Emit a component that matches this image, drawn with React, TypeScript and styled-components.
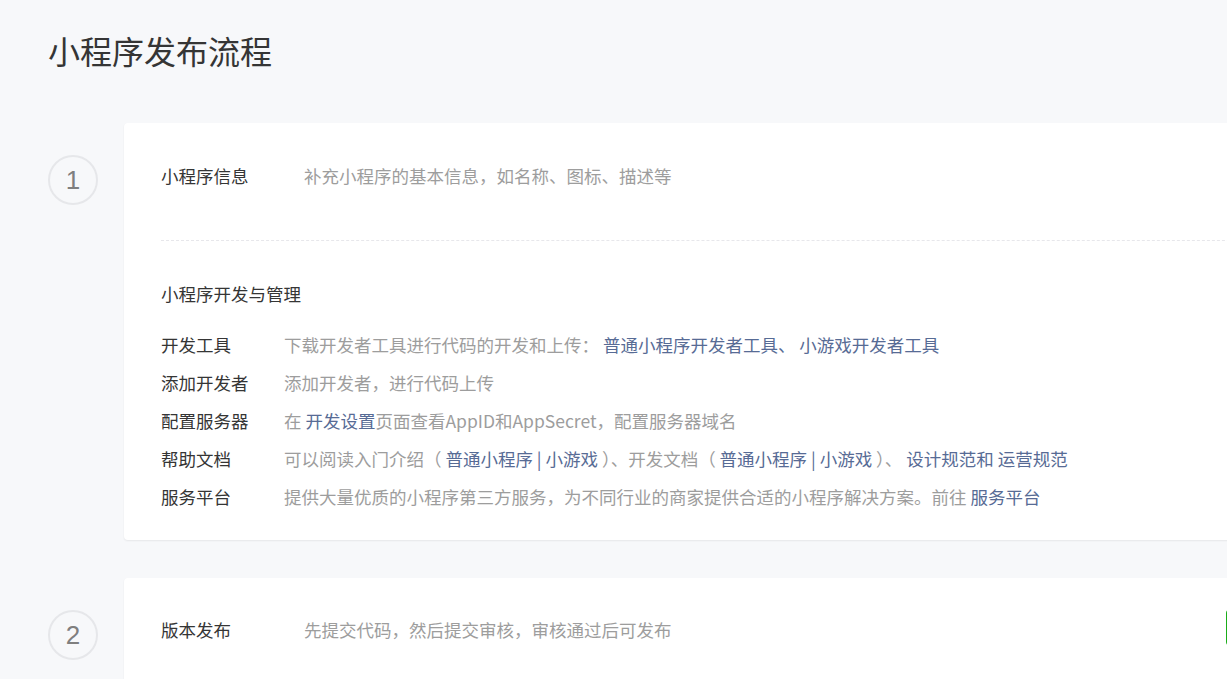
import React from "react";
import styled, { createGlobalStyle } from "styled-components";

const GlobalStyle = createGlobalStyle`
  html, body {
    margin: 0;
    padding: 0;
    background: #f7f8fa;
    overflow: hidden;
  }
  body {
    font-family: "Noto Sans CJK SC", "Microsoft YaHei", sans-serif;
    color: #353535;
  }
`

interface IDevRow { label: string, desc: React.ReactNode }

const getDevRows = (): IDevRow[] => [
  {
    label: '开发工具',
    desc: <>下载开发者工具进行代码的开发和上传： <Link>普通小程序开发者工具、</Link> <Link>小游戏开发者工具</Link></>
  },
  { label: '添加开发者', desc: '添加开发者，进行代码上传' },
  {
    label: '配置服务器',
    desc: <>在 <Link>开发设置</Link>页面查看AppID和AppSecret，配置服务器域名</>
  },
  {
    label: '帮助文档',
    desc: <>可以阅读入门介绍（ <Link>普通小程序 | 小游戏</Link> ）、开发文档（ <Link>普通小程序 | 小游戏</Link> ）、 <Link>设计规范和</Link> <Link>运营规范</Link></>
  },
  {
    label: '服务平台',
    desc: <>提供大量优质的小程序第三方服务，为不同行业的商家提供合适的小程序解决方案。前往 <Link>服务平台</Link></>
  },
]

export default function App() {
  const devRows = getDevRows()
  return (
    <Page>
      <GlobalStyle />
      <Title>小程序发布流程</Title>

      <Step>
        <Num>1</Num>
        <Card>
          <InfoRow>
            <InfoLabel>小程序信息</InfoLabel>
            <InfoDesc>补充小程序的基本信息，如名称、图标、描述等</InfoDesc>
          </InfoRow>
          <Divider />
          <SubTitle>小程序开发与管理</SubTitle>
          <DevList>
            {devRows.map(row => (
              <DevRow key={row.label}>
                <DevLabel>{row.label}</DevLabel>
                <DevDesc>{row.desc}</DevDesc>
              </DevRow>
            ))}
          </DevList>
        </Card>
      </Step>

      <Step>
        <Num>2</Num>
        <Card>
          <InfoRow $last>
            <InfoLabel>版本发布</InfoLabel>
            <InfoDesc>先提交代码，然后提交审核，审核通过后可发布</InfoDesc>
            <Button>详情</Button>
          </InfoRow>
        </Card>
      </Step>
    </Page>
  )
}

const Page = styled.div`
  padding: 30px 0 0 48px;
  width: 1400px;
`

const Title = styled.h1`
  margin: 0 0 53px;
  font-size: 32px;
  line-height: 40px;
  font-weight: 400;
  color: #353535;
`

const Step = styled.div`
  display: flex;
  align-items: flex-start;
  gap: 26px;
  margin-bottom: 38px;
`

const Num = styled.div`
  flex: none;
  width: 46px;
  height: 46px;
  margin-top: 32px;
  border: 2px solid #e6e7ea;
  border-radius: 50%;
  display: flex;
  align-items: center;
  justify-content: center;
  font-size: 26px;
  color: #7f7f7f;
  font-family: "Liberation Sans", "Noto Sans", sans-serif;
`

const Card = styled.div`
  width: 1243px;
  box-sizing: border-box;
  padding: 0 37px 24px;
  background: #fff;
  border-radius: 4px;
  box-shadow: 0 1px 2px rgba(0, 0, 0, 0.07);
`

const InfoRow = styled.div<{ $last?: boolean }>`
  display: flex;
  align-items: flex-start;
  padding: ${p => p.$last ? '41px 0 60px' : '42px 0 53px'};
  font-size: 17.5px;
  line-height: 22px;
`

const InfoLabel = styled.div`
  width: 143px;
  flex: none;
  color: #353535;
`

const InfoDesc = styled.div`
  flex: 1;
  color: #9d9d9d;
`

const Button = styled.button`
  flex: none;
  width: 104px;
  height: 37px;
  margin-top: -10px;
  padding: 0 0 0 40px;
  border: 1px solid #1aad19;
  border-radius: 4px;
  background: #1aad19;
  color: #fff;
  font-family: inherit;
  font-size: 15px;
`

const Divider = styled.div`
  border-top: 1px dashed #e7e7eb;
`

const SubTitle = styled.div`
  margin-top: 42px;
  font-size: 17.5px;
  line-height: 22px;
  color: #353535;
`

const DevList = styled.div`
  margin-top: 21px;
`

const DevRow = styled.div`
  display: flex;
  font-size: 17.5px;
  line-height: 38px;
  white-space: nowrap;
`

const DevLabel = styled.div`
  width: 123px;
  flex: none;
  color: #353535;
`

const DevDesc = styled.div`
  color: #9d9d9d;
`

const Link = styled.a`
  color: #576b95;
  text-decoration: none;
  cursor: pointer;
`
